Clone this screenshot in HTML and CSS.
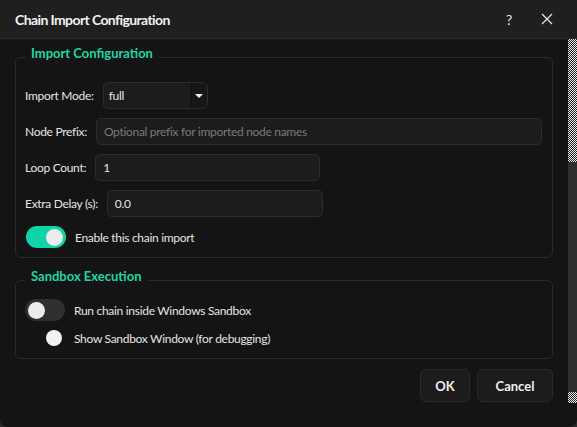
FILE: index.html
```html
<!DOCTYPE html>
<html lang="en">
<head>
  <meta charset="UTF-8" />
  <title>Chain Import Configuration</title>
  <link rel="stylesheet" href="styles.css">
</head>
<body>
  <div class="window">
    <div class="titlebar">
      <span class="title">Chain Import Configuration</span>
      <span class="help">?</span>
      <svg class="close" width="12" height="12" viewBox="0 0 12 12">
        <path d="M1 1 L11 11 M11 1 L1 11" stroke="#e8e8e8" stroke-width="1.2" fill="none" />
      </svg>
    </div>

    <div class="content">
      <div class="main">
        <fieldset class="group first">
          <legend>Import Configuration</legend>

          <div class="row">
            <label>Import Mode:</label>
            <div class="combo">
              <span>full</span>
              <span class="arrow"></span>
            </div>
          </div>

          <div class="row">
            <label>Node Prefix:</label>
            <input class="field grow" type="text" placeholder="Optional prefix for imported node names" />
          </div>

          <div class="row">
            <label>Loop Count:</label>
            <input class="field loop" type="text" value="1" />
          </div>

          <div class="row">
            <label>Extra Delay (s):</label>
            <input class="field delay" type="text" value="0.0" />
          </div>

          <div class="row toggle-row">
            <span class="toggle on"><span class="knob"></span></span>
            <span class="toggle-label">Enable this chain import</span>
          </div>
        </fieldset>

        <fieldset class="group second">
          <legend>Sandbox Execution</legend>

          <div class="row toggle-row">
            <span class="toggle"><span class="knob"></span></span>
            <span class="toggle-label">Run chain inside Windows Sandbox</span>
          </div>

          <div class="row check-row">
            <span class="dot"></span>
            <span class="toggle-label">Show Sandbox Window (for debugging)</span>
          </div>
        </fieldset>

        <div class="buttons">
          <button class="btn ok">OK</button>
          <button class="btn cancel">Cancel</button>
        </div>
      </div>

      <div class="scrollbar">
        <div class="track"></div>
        <div class="handle"></div>
        <div class="track small"></div>
      </div>
    </div>
  </div>
</body>
</html>
```

FILE: styles.css
```css
body {
  margin: 0;
  background: #2a2a2a;
  font-family: Lato, "Open Sans", Arial, sans-serif;
  font-size: 12px;
  letter-spacing: -0.3px;
  color: #e4e4e4;
}
.window {
  width: 577px;
  height: 427px;
  background: #141414;
  border-radius: 0 0 8px 8px;
  display: flex;
  flex-direction: column;
  overflow: hidden;
}
.titlebar {
  height: 38px;
  background: #1f1f1f;
  border-bottom: 1px solid #2e2e2e;
  display: flex;
  align-items: center;
  padding: 0 0 0 15px;
}
.title {
  font-size: 14px;
  font-weight: bold;
  letter-spacing: -0.6px;
  color: #f2f2f2;
  flex: 1;
}
.help {
  font-size: 14px;
  color: #e8e8e8;
  margin-right: 29px;
}
.close {
  margin-right: 24px;
}

.content {
  flex: 1;
  display: flex;
}
.main {
  flex: 1;
}

/* group boxes */
.group {
  margin: 7px 0 0 15px;
  width: 538px;
  box-sizing: border-box;
  border: 1px solid #2a2a2a;
  border-radius: 6px;
  padding: 14px 10px 9px 9px;
  min-width: 0;
}
.group legend {
  color: #1fd6a6;
  font-weight: bold;
  font-size: 13px;
  letter-spacing: 0;
  line-height: 14px;
  padding: 0 6px 8px 6px;
  margin-left: 0;
}
.group.second {
  margin-top: 11px;
  padding-top: 8px;
  padding-bottom: 10px;
}

.row {
  display: flex;
  align-items: center;
  gap: 9px;
  margin-bottom: 9px;
}
.row:last-child {
  margin-bottom: 0;
}
.row label {
  white-space: nowrap;
}

.combo {
  width: 105px;
  height: 27px;
  box-sizing: border-box;
  background: #1c1c1c;
  border: 1px solid #2c2c2c;
  border-radius: 5px;
  display: flex;
  align-items: center;
  padding-left: 5px;
}
.combo span:first-child {
  flex: 1;
}
.arrow {
  width: 15px;
  height: 25px;
  background: #171717;
  border-left: 1px solid #101010;
  position: relative;
  border-radius: 0 4px 4px 0;
}
.arrow::after {
  content: "";
  position: absolute;
  left: 3px;
  top: 11px;
  border-left: 4px solid transparent;
  border-right: 4px solid transparent;
  border-top: 4px solid #f0f0f0;
}

.field {
  height: 27px;
  box-sizing: border-box;
  background: #1c1c1c;
  border: 1px solid #2c2c2c;
  border-radius: 5px;
  color: #e4e4e4;
  font-family: inherit;
  font-size: 12px;
  letter-spacing: -0.3px;
  padding: 0 7px;
  outline: none;
}
.field::placeholder {
  color: #7a7a7a;
}
.field.grow {
  flex: 1;
}
.field.loop {
  width: 225px;
}
.field.delay {
  width: 216px;
}

/* toggles */
.toggle-row {
  gap: 9px;
  height: 22px;
}
.toggle {
  width: 40px;
  height: 22px;
  border-radius: 11px;
  background: #2f2f2f;
  display: flex;
  align-items: center;
  padding: 0 3px;
  box-sizing: border-box;
  margin-left: 1px;
}
.toggle .knob {
  width: 17px;
  height: 17px;
  border-radius: 50%;
  background: #ececec;
}
.toggle.on {
  background: #0fd3a9;
  justify-content: flex-end;
}
.second .toggle {
  margin-left: 0;
}
.check-row {
  height: 20px;
  margin-top: -2px;
  gap: 12px;
}
.dot {
  width: 16px;
  height: 16px;
  border-radius: 50%;
  background: #f2f2f2;
  margin-left: 21px;
}

.buttons {
  display: flex;
  justify-content: flex-end;
  gap: 7px;
  width: 553px;
  margin-top: 10px;
}
.btn {
  height: 33px;
  background: #1c1c1c;
  border: 1px solid #2a2a2a;
  border-radius: 6px;
  color: #f0f0f0;
  font-family: inherit;
  font-weight: bold;
  font-size: 13px;
}
.btn.ok {
  width: 50px;
}
.btn.cancel {
  width: 76px;
}

/* scrollbar */
.scrollbar {
  width: 9px;
  display: flex;
  flex-direction: column;
  margin-bottom: 24px;
}
.track {
  height: 123px;
  background: repeating-conic-gradient(#f0f0f0 0 25%, #222 0 50%) 0 0 / 2px 2px;
}
.track.small {
  height: 11px;
}
.handle {
  height: 230px;
  background: #2f2f2f;
}
```
